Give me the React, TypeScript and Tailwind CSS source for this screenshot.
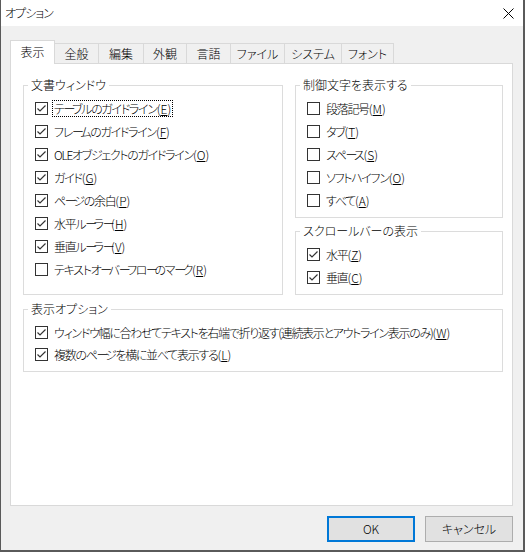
import React from "react";

const Check = ({ checked }: { checked: boolean }) => (
  <svg width="13" height="13" viewBox="0 0 13 13" className="shrink-0 block">
    <rect x="0.5" y="0.5" width="12" height="12" fill="#ffffff" stroke="#333333" strokeWidth="1" />
    {checked && (
      <path d="M2.5 6.5 L5 9 L10.5 3.5" fill="none" stroke="#333333" strokeWidth="1.2" />
    )}
  </svg>
);

type Item = { label: string; key: string; checked: boolean; focus?: boolean };

const Jp = ({ text }: { text: string }) => {
  const parts = text.split("ー");
  return (
    <>
      {parts.map((p, i) => (
        <React.Fragment key={i}>
          {p}
          {i < parts.length - 1 && <span className="tracking-[-3.5px]">ー</span>}
        </React.Fragment>
      ))}
    </>
  );
};

const Row = ({ item, h = "h-[23px]" }: { item: Item; h?: string }) => (
  <div className={`flex items-center gap-[4px] ${h}`}>
    <Check checked={item.checked} />
    <span
      className={`px-[1px] leading-[15px] border tracking-[-1.3px] ${
        item.focus ? "border-dotted border-black" : "border-transparent"
      } whitespace-nowrap`}
    >
      <Jp text={item.label} />
      <span className="tracking-normal">
        (<u>{item.key}</u>)
      </span>
    </span>
  </div>
);

const Group = ({
  title,
  children,
  className = "",
  inner = "",
}: {
  title: string;
  children: React.ReactNode;
  className?: string;
  inner?: string;
}) => (
  <fieldset className={`border border-[#dcdcdc] p-0 m-0 min-w-0 ${className}`}>
    <legend className="ml-[4px] px-[3px] leading-[16px] text-black">{title}</legend>
    <div className={`pl-[11px] pt-[4px] ${inner}`}>{children}</div>
  </fieldset>
);

const tabs = [
  { t: "表示", w: "w-[45px]" },
  { t: "全般", w: "w-[45px]" },
  { t: "編集", w: "w-[46px]" },
  { t: "外観", w: "w-[44px]" },
  { t: "言語", w: "w-[45px]" },
  { t: "ファイル", w: "w-[55px]" },
  { t: "システム", w: "w-[58px]" },
  { t: "フォント", w: "w-[53px]" },
];

const docItems: Item[] = [
  { label: "テーブルのガイドライン", key: "E", checked: true, focus: true },
  { label: "フレームのガイドライン", key: "F", checked: true },
  { label: "OLEオブジェクトのガイドライン", key: "O", checked: true },
  { label: "ガイド", key: "G", checked: true },
  { label: "ページの余白", key: "P", checked: true },
  { label: "水平ルーラー", key: "H", checked: true },
  { label: "垂直ルーラー", key: "V", checked: true },
  { label: "テキストオーバーフローのマーク", key: "R", checked: false },
];

const ctrlItems: Item[] = [
  { label: "段落記号", key: "M", checked: false },
  { label: "タブ", key: "T", checked: false },
  { label: "スペース", key: "S", checked: false },
  { label: "ソフトハイフン", key: "O", checked: false },
  { label: "すべて", key: "A", checked: false },
];

const scrollItems: Item[] = [
  { label: "水平", key: "Z", checked: true },
  { label: "垂直", key: "C", checked: true },
];

const optItems: Item[] = [
  {
    label: "ウィンドウ幅に合わせてテキストを右端で折り返す(連続表示とアウトライン表示のみ)",
    key: "W",
    checked: true,
  },
  { label: "複数のページを横に並べて表示する", key: "L", checked: true },
];

export default function App() {
  return (
    <div className="w-[525px] h-[552px] bg-[#f0f0f0] border-l border-r-2 border-b-2 border-[#5a5a5a] flex flex-col text-[12px] font-light text-black font-['Noto_Sans_CJK_JP','Noto_Sans',sans-serif] [font-feature-settings:'palt'] overflow-hidden">
      {/* title bar */}
      <div className="h-[26px] bg-white flex items-center justify-between pl-[4px] pr-[9px] shrink-0">
        <span className="leading-[16px] tracking-[-1px]">オプション</span>
        <svg width="11" height="11" viewBox="0 0 11 11">
          <path d="M0.5 0.5 L10.5 10.5 M10.5 0.5 L0.5 10.5" stroke="#000" strokeWidth="1" />
        </svg>
      </div>

      {/* body */}
      <div className="pl-[9px] pr-[10px] pt-[14px] flex flex-col">
        {/* tabs */}
        <div className="flex items-end h-[23px]">
          {tabs.map((tab, i) => (
            <div
              key={tab.t}
              className={`${tab.w} ${i > 0 ? "-ml-px" : ""} border border-b-0 border-[#d9d9d9] flex items-center justify-center leading-[16px] ${
                i === 0
                  ? "h-[24px] -mb-px bg-white relative z-10 pb-[2px]"
                  : "h-[20px] bg-[#f0f0f0]"
              }`}
            >
              {tab.t}
            </div>
          ))}
        </div>

        {/* panel */}
        <div className="h-[443px] bg-white border border-[#d9d9d9] pl-[12px] pr-[9px] pt-[13px] flex flex-col">
          <div className="flex gap-[12px]">
            <Group title="文書ウィンドウ" className="w-[260px]" inner="pb-[13px]">
              {docItems.map((it) => (
                <Row key={it.label} item={it} />
              ))}
            </Group>
            <div className="w-[208px] flex flex-col gap-[5px]">
              <Group title="制御文字を表示する" inner="pb-[5px]">
                {ctrlItems.map((it) => (
                  <Row key={it.label} item={it} />
                ))}
              </Group>
              <Group title="スクロールバーの表示" inner="pb-[5px]">
                {scrollItems.map((it) => (
                  <Row key={it.label} item={it} />
                ))}
              </Group>
            </div>
          </div>
          <Group title="表示オプション" className="mt-[6px]" inner="pb-[6px]">
            {optItems.map((it) => (
              <Row key={it.key} item={it} h="h-[22px]" />
            ))}
          </Group>
        </div>

        {/* buttons */}
        <div className="flex justify-end gap-[10px] mt-[10px]">
          <button className="w-[88px] h-[26px] bg-[#e1e1e1] border-2 border-[#0078d7] leading-[16px]">
            OK
          </button>
          <button className="w-[88px] h-[26px] bg-[#e1e1e1] border border-[#adadad] leading-[16px]">
            キャンセル
          </button>
        </div>
      </div>
    </div>
  );
}
